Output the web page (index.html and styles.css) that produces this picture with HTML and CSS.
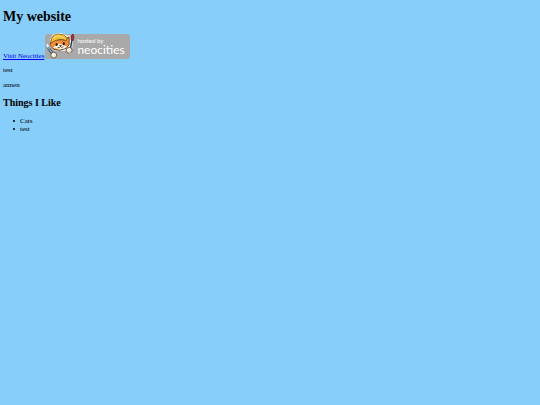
FILE: index.html
```html
<!DOCTYPE html>
<html lang="en">
<head>
<meta charset="utf-8">
<title>My website</title>
<link rel="stylesheet" href="styles.css">
</head>
<body>
<h1>My website</h1>
<div class="links">
  <a href="#neocities">Visit Neocities</a>
  <span class="badge">
    <svg class="cat" viewBox="0 0 31 28" aria-hidden="true">
      <g stroke="#fff" stroke-width="3" stroke-linejoin="round" stroke-linecap="round" fill="#fff">
        <path d="M7 7 9 3 15 1 22 4 25 4 25 12 20 17 11 17 6 13Z"/>
        <path d="M2 13 10 24M28 4 26 20"/>
      </g>
      <path d="M7 7 5 13 9 17 15 18 22 16 25 12 25 4 19 7Z" fill="#f28d35" stroke="#402b20" stroke-width=".8"/>
      <path d="M8 15 13 12 15 11 17 12 23 14 20 16 15 17Z" fill="#fff2df"/>
      <path d="M6 9Q7 1 14 1Q20 1 23 5L22 8Q17 5 10 8L5 11Z" fill="#f5c138" stroke="#72501d" stroke-width=".8"/>
      <path d="M9 5Q14 1 19 5" fill="none" stroke="#ffe070" stroke-width="1"/>
      <ellipse cx="12" cy="12" rx="1.1" ry="1.6" fill="#211b20"/>
      <ellipse cx="19.5" cy="11" rx="1.1" ry="1.6" fill="#211b20"/>
      <path d="M15 13H17L16 14ZM13 15Q15 16 16 14Q17 16 19 14" fill="none" stroke="#3c2521" stroke-width=".8"/>
      <path d="m3 15 6 8" stroke="#26384a" stroke-width="3"/>
      <path d="m3 15 6 8M1 12v3l3 1 1-3" fill="none" stroke="#8ca4b6" stroke-width="1.5"/>
      <path d="M28 7 26 18" stroke="#303540" stroke-width="1.5"/>
      <path d="M27 7V3L29 1 30 4 29 8Z" fill="#a92732" stroke="#47232d" stroke-width=".7"/>
      <circle cx="9" cy="23" r="3" fill="#fff8e9" stroke="#49382e" stroke-width=".8"/>
      <circle cx="25" cy="18" r="3" fill="#fff8e9" stroke="#49382e" stroke-width=".8"/>
      <path d="M8 24v1m2-2v2M24 19v1m2-2v2" stroke="#d6a76f" stroke-width=".7"/>
    </svg>
    <span class="wordmark">
      <span class="hosted">hosted by</span>
      <span class="name">neocities</span>
    </span>
  </span>
</div>
<p>test</p>
<p>annen</p>
<h2>Things I Like</h2>
<ul>
  <li>Cats</li>
  <li>test</li>
</ul>
</body>
</html>
```
FILE: styles.css
```css
body {
  margin: 9px 3px;
  background: #87cefa;
  color: #000;
  font: 7px/8px "Liberation Serif", serif;
}

h1 {
  margin: 0 0 9px;
  font-size: 14px;
  line-height: 16px;
}

h2 {
  margin: 8px 0;
  font-size: 10px;
  line-height: 12px;
}

p {
  margin: 7px 0;
}

ul {
  margin: 0;
  padding-left: 10px;
  list-style: none;
}

li {
  display: flex;
  align-items: center;
  gap: 5px;
}

li::before {
  content: "";
  width: 2px;
  height: 2px;
  border-radius: 1px;
  background: #000;
}

a {
  color: #00e;
  line-height: 6px;
}

.links {
  display: flex;
  align-items: flex-end;
  gap: 1px;
}

.badge {
  display: flex;
  height: 25px;
  padding-right: 5px;
  border-radius: 3px;
  background: #a9a9a9;
  color: #fff;
}

.cat {
  width: 30px;
  height: 27px;
  margin-top: -1px;
}

.wordmark {
  display: flex;
  flex-direction: column;
  padding: 3px 0 0 2px;
  font-family: Lato, sans-serif;
}

.hosted {
  font-size: 6px;
  line-height: 7px;
}

.name {
  font-size: 12px;
  line-height: 12px;
}
```
